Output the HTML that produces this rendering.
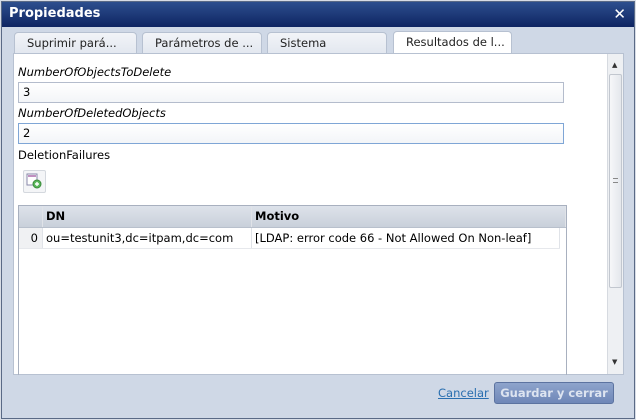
<!DOCTYPE html>
<html><head><style>
*{margin:0;padding:0;box-sizing:border-box}
body{width:636px;height:420px;overflow:hidden;background:#d8dde6;font-family:"DejaVu Sans","Liberation Sans",sans-serif;font-size:11px;color:#000;position:relative}
.win{position:absolute;left:1px;top:1px;width:634px;height:418px;background:#cfd8e6;border:1px solid #5a6a86}
.title{position:absolute;left:0;top:0;width:632px;height:25px;background:linear-gradient(#2d4f8e,#0e2462);color:#fff;font-weight:bold;font-size:13px;line-height:24px;padding-left:7px}
.x{position:absolute;right:8px;top:0;color:#fff;font-size:15px;font-weight:normal}
.tab{position:absolute;top:30px;height:22px;background:linear-gradient(#f2f4f8,#e2e7ef);border:1px solid #b7c1d1;border-bottom:none;border-radius:4px 4px 0 0;font-size:11.5px;line-height:20px;padding-left:12px;color:#222}
.tab.act{background:#fff;height:23px;top:29px}
.panel{position:absolute;left:11px;top:51px;width:611px;height:322px;background:#fff;border:1px solid #b7c1d1}
.lbl{position:absolute;left:4px;font-style:italic;font-size:11.5px}
.inp{position:absolute;left:4px;width:546px;height:21px;border:1px solid #b4bccc;background:linear-gradient(#fff,#f3f5f8);padding-left:4px;line-height:19px;font-size:11.5px}
.sb{position:absolute;right:0;top:0;width:16px;height:320px;background:#eef0f3;border-left:1px solid #d6dae0}
.grid{position:absolute;left:4px;top:151px;width:549px;height:170px;border:1px solid #a8b0bf;border-bottom:none}
.hd{position:absolute;left:0;top:0;width:547px;height:22px;background:linear-gradient(#dde2ea,#c9d0da);border-bottom:1px solid #b8c0cc;font-weight:bold;font-size:11.5px;line-height:21px}
.c{position:absolute;top:0;height:100%;border-right:1px solid #e0e3e8;padding-left:3px}
</style></head><body>
<div class="win">
<div class="title">Propiedades<span class="x">✕</span></div>
<div class="tab" style="left:12px;width:123px">Suprimir pará...</div>
<div class="tab" style="left:140px;width:120px">Parámetros de ...</div>
<div class="tab" style="left:265px;width:120px">Sistema</div>
<div class="tab act" style="left:391px;width:119px">Resultados de l...</div>
<div class="panel">
<div class="lbl" style="top:11px">NumberOfObjectsToDelete</div>
<div class="inp" style="top:28px">3</div>
<div class="lbl" style="top:52px">NumberOfDeletedObjects</div>
<div class="inp" style="top:69px;border-color:#7fa6d6">2</div>
<div class="lbl" style="top:94px;font-style:normal">DeletionFailures</div>
<div style="position:absolute;left:9px;top:116px;width:23px;height:23px;border:1px solid #d4d8de;border-radius:2px;background:#f4f5f7">
<svg width="21" height="21" viewBox="0 0 21 21"><rect x="3" y="3" width="10" height="11" fill="#fff" stroke="#8888aa"/><rect x="4" y="4" width="8" height="2" fill="#c090c0"/><circle cx="13" cy="13" r="4" fill="#5cb85c" stroke="#3a8a3a"/><path d="M11 13h4M13 11v4" stroke="#fff" stroke-width="1.4"/></svg></div>
<div class="grid">
<div class="hd"><div class="c" style="left:0;width:24px"></div><div class="c" style="left:24px;width:209px">DN</div><div class="c" style="left:233px;width:314px">Motivo</div></div>
<div style="position:absolute;left:0;top:22px;width:541px;height:21px;border-bottom:1px solid #e6e8ec;font-size:11.5px;line-height:21px">
<div class="c" style="left:0;width:24px;text-align:right;padding-right:4px;background:#f0f1f3">0</div>
<div class="c" style="left:24px;width:209px">ou=testunit3,dc=itpam,dc=com</div>
<div class="c" style="left:233px;width:308px">[LDAP: error code 66 - Not Allowed On Non-leaf]</div></div>
</div>
<div class="sb"><div style="position:absolute;left:4px;top:7px;font-size:7px;color:#333">▲</div><div style="position:absolute;left:1px;top:20px;width:13px;height:214px;background:linear-gradient(90deg,#f6f7f9,#e4e7ec);border:1px solid #c2c7cf;border-radius:2px"><div style="position:absolute;left:3px;top:103px;width:5px;height:5px;border-top:1px solid #888;border-bottom:1px solid #888"></div></div><div style="position:absolute;left:4px;top:304px;font-size:7px;color:#333">▼</div></div>
</div>
<div style="position:absolute;left:436px;top:384px;color:#2a6fb0;text-decoration:underline;font-size:11.5px">Cancelar</div>
<div style="position:absolute;left:492px;top:380px;width:120px;height:22px;background:linear-gradient(#8ea4cc,#6f87b8);border:1px solid #5c73a0;border-radius:3px;color:#dde4f0;font-weight:bold;font-size:11.5px;line-height:20px;text-align:center">Guardar y cerrar</div>
</div>
</body></html>
